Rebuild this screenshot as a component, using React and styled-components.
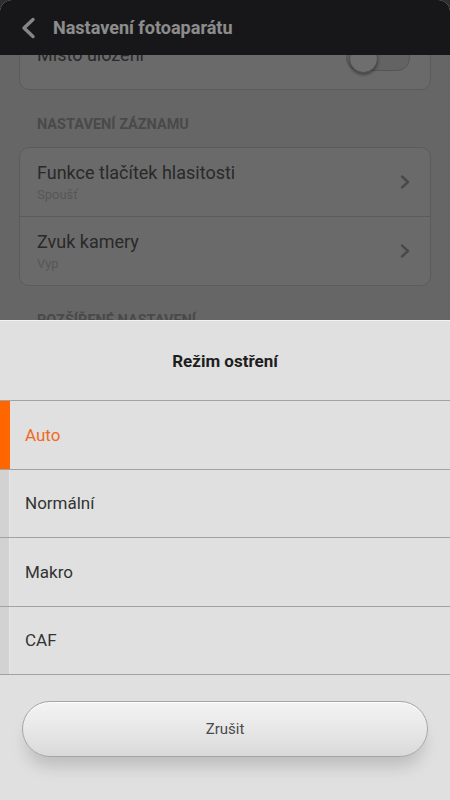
import React from "react";
import styled, { createGlobalStyle } from "styled-components";

const Global = createGlobalStyle`
  html, body { margin: 0; padding: 0; background: #2e2e2e; }
  body { font-family: Roboto, "Noto Sans", "Liberation Sans", sans-serif; }
  * { box-sizing: border-box; }
`;

const Screen = styled.div`
  position: relative;
  width: 450px;
  height: 800px;
  overflow: hidden;
  background: #bbbbbb;
  border-radius: 12px 12px 0 0;
  display: flex;
  flex-direction: column;
`;

const Header = styled.header`
  position: relative;
  z-index: 1;
  height: 55px;
  flex: none;
  background: #2a2b2e;
  display: flex;
  align-items: center;
  gap: 17px;
  padding-left: 20px;
  border-radius: 12px 12px 0 0;
`;

const HeaderTitle = styled.h1`
  margin: 0;
  font-size: 18px;
  font-weight: 700;
  color: #ffffff;
`;

const Content = styled.main`
  flex: 1;
  overflow: hidden;
  display: flex;
  flex-direction: column;
  padding: 0 19px;
`;

const Card = styled.section`
  background: #c2c2c2;
  border: 1px solid #a6a6a6;
  border-radius: 10px;
  margin-top: ${(p) => p.$offset || 0}px;
  display: flex;
  flex-direction: column;
`;

const Row = styled.div`
  height: ${(p) => (p.$first ? 68 : 69)}px;
  display: flex;
  align-items: center;
  padding: 0 20px 0 17px;
  border-top: ${(p) => (p.$first ? "none" : "1px solid #a6a6a6")};
`;

const RowText = styled.div`
  flex: 1;
  display: flex;
  flex-direction: column;
`;

const RowTitle = styled.div`
  font-size: 18px;
  line-height: 22px;
  color: #4c4c4c;
`;

const RowSub = styled.div`
  font-size: 13px;
  line-height: 16px;
  margin-top: 3px;
  color: #9e9e9e;
`;

const Chevron = styled.div`
  display: flex;
`;

const Toggle = styled.div`
  position: relative;
  width: 64px;
  height: 26px;
  border-radius: 13px;
  background: #b4b4b4;
  border: 1px solid #9a9a9a;
  margin-top: 6px;
`;

const Knob = styled.div`
  position: absolute;
  left: 2px;
  top: -2px;
  width: 29px;
  height: 29px;
  border-radius: 50%;
  background: #c9c9c9;
  border: 1px solid #8e8e8e;
  box-shadow: 0 2px 3px rgba(0, 0, 0, 0.35);
`;

const SectionLabel = styled.div`
  padding: 26px 18px 13px;
  font-size: 14.5px;
  line-height: 18px;
  font-weight: 700;
  color: #868686;
  flex: none;
`;

const Dim = styled.div`
  position: absolute;
  inset: 0;
  z-index: 2;
  background: rgba(0, 0, 0, 0.45);
`;

const Sheet = styled.div`
  position: absolute;
  z-index: 3;
  left: 0;
  right: 0;
  bottom: 0;
  height: 480px;
  background: #e0e0e0;
  border-top: 1px solid #f2f2f2;
  display: flex;
  flex-direction: column;
`;

const SheetTitle = styled.div`
  height: 80px;
  flex: none;
  display: flex;
  align-items: center;
  justify-content: center;
  font-size: 17px;
  font-weight: 700;
  color: #1e1e1e;
  border-bottom: 1px solid #a2a2a2;
`;

const Option = styled.div`
  height: 68.5px;
  flex: none;
  display: flex;
  align-items: center;
  border-bottom: 1px solid #a2a2a2;
`;

const Marker = styled.div`
  width: 10px;
  align-self: stretch;
  background: ${(p) => (p.$active ? "#ff6600" : "#d2d2d2")};
  border-right: 1px solid ${(p) => (p.$active ? "#ff6600" : "#e6e6e6")};
`;

const OptionLabel = styled.div`
  padding-left: 15px;
  font-size: 17px;
  color: ${(p) => (p.$active ? "#f06a1e" : "#333333")};
`;

const Footer = styled.div`
  flex: 1;
  padding: 26px 22px 0;
`;

const CancelButton = styled.button`
  width: 100%;
  height: 56px;
  border-radius: 28px;
  border: 1px solid #a4a4a4;
  background: linear-gradient(#f3f3f3, #e9e9e9 45%, #dadada);
  box-shadow: 0 14px 16px -4px rgba(0, 0, 0, 0.15),
    inset 0 1px 0 rgba(255, 255, 255, 0.9);
  font-family: inherit;
  font-size: 15px;
  color: #4a4a4a;
  display: flex;
  align-items: center;
  justify-content: center;
`;

const BackIcon = () => (
  <svg width="16" height="22" viewBox="0 0 16 22">
    <path d="M13 2.5 L4 11 L13 19.5" fill="none" stroke="#f2f2f2" strokeWidth="3.4" strokeLinecap="round" strokeLinejoin="round" />
  </svg>
);

const ChevronIcon = () => (
  <svg width="10" height="14" viewBox="0 0 10 14">
    <path d="M2 1.5 L8 7 L2 12.5" fill="none" stroke="#858585" strokeWidth="2.4" strokeLinecap="round" strokeLinejoin="round" />
  </svg>
);

const options = ["Auto", "Normální", "Makro", "CAF"];

export default function App() {
  return (
    <>
      <Global />
      <Screen>
        <Header>
          <BackIcon />
          <HeaderTitle>Nastavení fotoaparátu</HeaderTitle>
        </Header>
        <Content>
          <Card $offset={-35}>
            <Row $first>
              <RowText>
                <RowTitle>Místo uložení</RowTitle>
              </RowText>
              <Toggle>
                <Knob />
              </Toggle>
            </Row>
          </Card>
          <SectionLabel>NASTAVENÍ ZÁZNAMU</SectionLabel>
          <Card>
            <Row $first>
              <RowText>
                <RowTitle>Funkce tlačítek hlasitosti</RowTitle>
                <RowSub>Spoušť</RowSub>
              </RowText>
              <Chevron>
                <ChevronIcon />
              </Chevron>
            </Row>
            <Row>
              <RowText>
                <RowTitle>Zvuk kamery</RowTitle>
                <RowSub>Vyp</RowSub>
              </RowText>
              <Chevron>
                <ChevronIcon />
              </Chevron>
            </Row>
          </Card>
          <SectionLabel>ROZŠÍŘENÉ NASTAVENÍ</SectionLabel>
        </Content>
        <Dim />
        <Sheet>
          <SheetTitle>Režim ostření</SheetTitle>
          {options.map((o, i) => (
            <Option key={o}>
              <Marker $active={i === 0} />
              <OptionLabel $active={i === 0}>{o}</OptionLabel>
            </Option>
          ))}
          <Footer>
            <CancelButton>Zrušit</CancelButton>
          </Footer>
        </Sheet>
      </Screen>
    </>
  );
}
